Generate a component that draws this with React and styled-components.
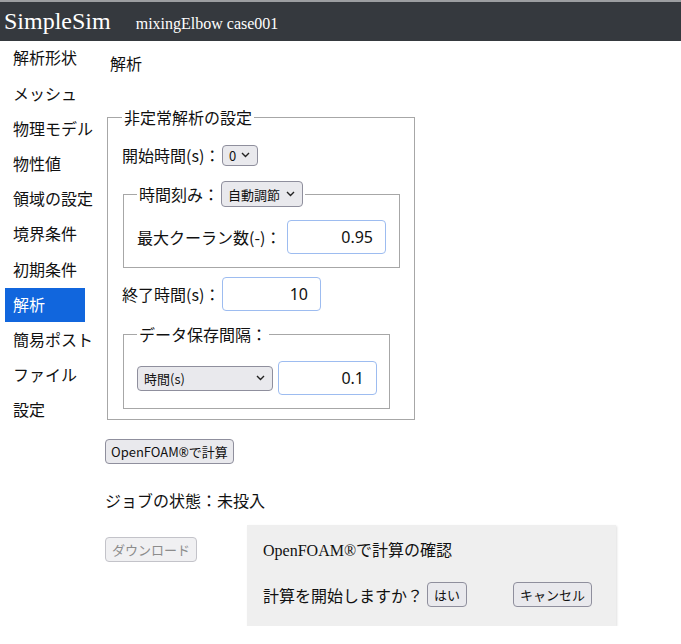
import React from "react"
import styled, { createGlobalStyle } from "styled-components"

const GlobalStyle = createGlobalStyle`
  body {
    margin: 0;
    background: #fff;
    color: #111;
    font-family: "Noto Sans CJK JP", "Noto Sans", sans-serif;
  }
`

const sans = `"Noto Sans CJK JP", "Noto Sans", sans-serif`
const uiSans = `"Noto Sans", "Noto Sans CJK JP", sans-serif`
const serif = `"Liberation Serif", "Noto Sans CJK JP", serif`

const Header = styled.header`
  display: flex;
  align-items: baseline;
  gap: 25px;
  height: 39px;
  padding: 0 4px;
  border-top: 2px solid #9c9ea1;
  background: #35393e;
  color: #fff;
  font-family: ${serif};
`
const Brand = styled.div`
  font-size: 24px;
  line-height: 38px;
`
const CaseName = styled.div`
  font-size: 16px;
  line-height: 38px;
`

const Body = styled.div`
  display: flex;
`
const Sidebar = styled.nav`
  display: flex;
  flex-direction: column;
  width: 100px;
  flex-shrink: 0;
`
const NavItem = styled.div`
  margin: 1px 0 1px 5px;
  width: 80px;
  box-sizing: border-box;
  padding: 3.4px 8px 5.8px;
  font-size: 16px;
  line-height: 24px;
  white-space: nowrap;
  background: ${p => (p.$active ? "#1166dd" : "transparent")};
  color: ${p => (p.$active ? "#fff" : "#111")};
`

const Main = styled.main`
  display: flex;
  flex-direction: column;
  align-items: flex-start;
  padding-left: 5px;
`
const Title = styled.div`
  margin: 10px 0 0 5px;
  font-size: 16px;
  line-height: 24px;
`

const Fieldset = styled.fieldset`
  margin: ${p => p.$margin || "0"};
  padding: ${p => p.$padding || "0 14px 10px 14px"};
  width: fit-content;
  border: 1px solid #a7a7a7;
  box-shadow: inset 1px 1px 0 #fff, 1px 1px 0 #fff;
  min-inline-size: 0;
`
const Legend = styled.legend`
  display: flex;
  align-items: center;
  gap: 2px;
  padding: 0 2px;
  font-size: 16px;
  line-height: 24px;
`
const Row = styled.div`
  display: flex;
  align-items: center;
  margin-top: ${p => p.$top || 0}px;
  gap: ${p => p.$gap || 0}px;
`
const Label = styled.span`
  width: ${p => p.$w}px;
  font-size: 16px;
  line-height: 24px;
  white-space: nowrap;
`
const NumberBox = styled.input`
  box-sizing: border-box;
  width: 99px;
  height: 34px;
  padding: 0 12px;
  border: 1px solid #9dbcf0;
  border-radius: 4px;
  text-align: right;
  font-family: ${uiSans};
  font-size: 16px;
  color: #111;
  background: #fff;
  outline: none;
`

const SelectWrap = styled.span`
  position: relative;
  display: inline-flex;
`
const Select = styled.select`
  appearance: none;
  box-sizing: border-box;
  width: ${p => p.$w}px;
  height: ${p => p.$h}px;
  padding: 0 20px 0 6px;
  border: 1px solid #8f8f9d;
  border-radius: 4px;
  background: #e9e9ed;
  color: #111;
  font-family: ${sans};
  font-size: 13px;
  outline: none;
`
const Chevron = styled.svg`
  position: absolute;
  right: 8px;
  top: 50%;
  margin-top: -3px;
  pointer-events: none;
`

const DropDown = ({ w, h, value, options }) => (
  <SelectWrap>
    <Select $w={w} $h={h} defaultValue={value}>
      {options.map(o => (
        <option key={o}>{o}</option>
      ))}
    </Select>
    <Chevron width="9" height="6" viewBox="0 0 9 6">
      <path d="M1 1 L4.5 4.5 L8 1" fill="none" stroke="#222" strokeWidth="1.4" />
    </Chevron>
  </SelectWrap>
)

const Button = styled.button`
  box-sizing: border-box;
  height: 25px;
  padding: 0 ${p => p.$pad || 6}px;
  margin: ${p => p.$margin || "0"};
  border: 1px solid ${p => (p.disabled ? "#c3c3c9" : "#8f8f9d")};
  border-radius: 4px;
  background: ${p => (p.disabled ? "#f0f0f2" : "#e9e9ed")};
  color: ${p => (p.disabled ? "#8c8c8c" : "#111")};
  font-family: ${sans};
  font-size: 13px;
  line-height: 23px;
`
const Reg = styled.span`
  font-family: ${uiSans};
  font-size: 12px;
`

const Status = styled.div`
  margin-top: 24px;
  font-size: 16px;
  line-height: 24px;
`
const BottomRow = styled.div`
  display: flex;
  align-items: flex-start;
  margin-top: 13px;
`
const Dialog = styled.div`
  box-sizing: border-box;
  width: 369px;
  height: 101px;
  margin-left: 50px;
  padding: 14px 16px 0;
  background: #efefef;
  box-shadow: 1px 1px 2px rgba(0, 0, 0, 0.12);
`
const DialogTitle = styled.div`
  font-family: ${serif};
  font-size: 16px;
  line-height: 24px;
`
const DialogRow = styled.div`
  display: flex;
  align-items: center;
  margin-top: 19px;
  font-size: 16px;
  line-height: 24px;
`

const menu = [
  "解析形状",
  "メッシュ",
  "物理モデル",
  "物性値",
  "領域の設定",
  "境界条件",
  "初期条件",
  "解析",
  "簡易ポスト",
  "ファイル",
  "設定",
]

export default function App() {
  return (
    <>
      <GlobalStyle />
      <Header>
        <Brand>SimpleSim</Brand>
        <CaseName>mixingElbow case001</CaseName>
      </Header>
      <Body>
        <Sidebar>
          {menu.map(m => (
            <NavItem key={m} $active={m === "解析"}>
              {m}
            </NavItem>
          ))}
        </Sidebar>
        <Main>
          <Title>解析</Title>
          <Fieldset $margin="30px 0 0 2px">
            <Legend>非定常解析の設定</Legend>
            <Row $top={14}>
              <Label $w={100}>開始時間(s)：</Label>
              <DropDown w={36} h={21} value="0" options={["0"]} />
            </Row>
            <Fieldset $margin="14px 0 0 1px" $padding="0 13px 13px 13px">
              <Legend>
                時間刻み：
                <DropDown w={82} h={26} value="自動調節" options={["自動調節", "固定"]} />
              </Legend>
              <Row $top={13}>
                <Label $w={150}>最大クーラン数(-)：</Label>
                <NumberBox defaultValue="0.95" />
              </Row>
            </Fieldset>
            <Row $top={9}>
              <Label $w={100}>終了時間(s)：</Label>
              <NumberBox defaultValue="10" />
            </Row>
            <Fieldset $margin="11px 0 0 1px" $padding="0 12px 13px 13px">
              <Legend>データ保存間隔：</Legend>
              <Row $top={15} $gap={5}>
                <DropDown w={136} h={25} value="時間(s)" options={["時間(s)", "ステップ"]} />
                <NumberBox defaultValue="0.1" />
              </Row>
            </Fieldset>
          </Fieldset>
          <Button $margin="19px 0 0 0" $pad={5}>
            OpenFOAM<Reg>®</Reg>で計算
          </Button>
          <Status>ジョブの状態：未投入</Status>
          <BottomRow>
            <Button disabled $margin="12px 0 0 0">
              ダウンロード
            </Button>
            <Dialog>
              <DialogTitle>OpenFOAM®で計算の確認</DialogTitle>
              <DialogRow>
                計算を開始しますか？
                <Button $margin="0 0 0 4px">はい</Button>
                <Button $margin="0 0 0 46px">キャンセル</Button>
              </DialogRow>
            </Dialog>
          </BottomRow>
        </Main>
      </Body>
    </>
  )
}
